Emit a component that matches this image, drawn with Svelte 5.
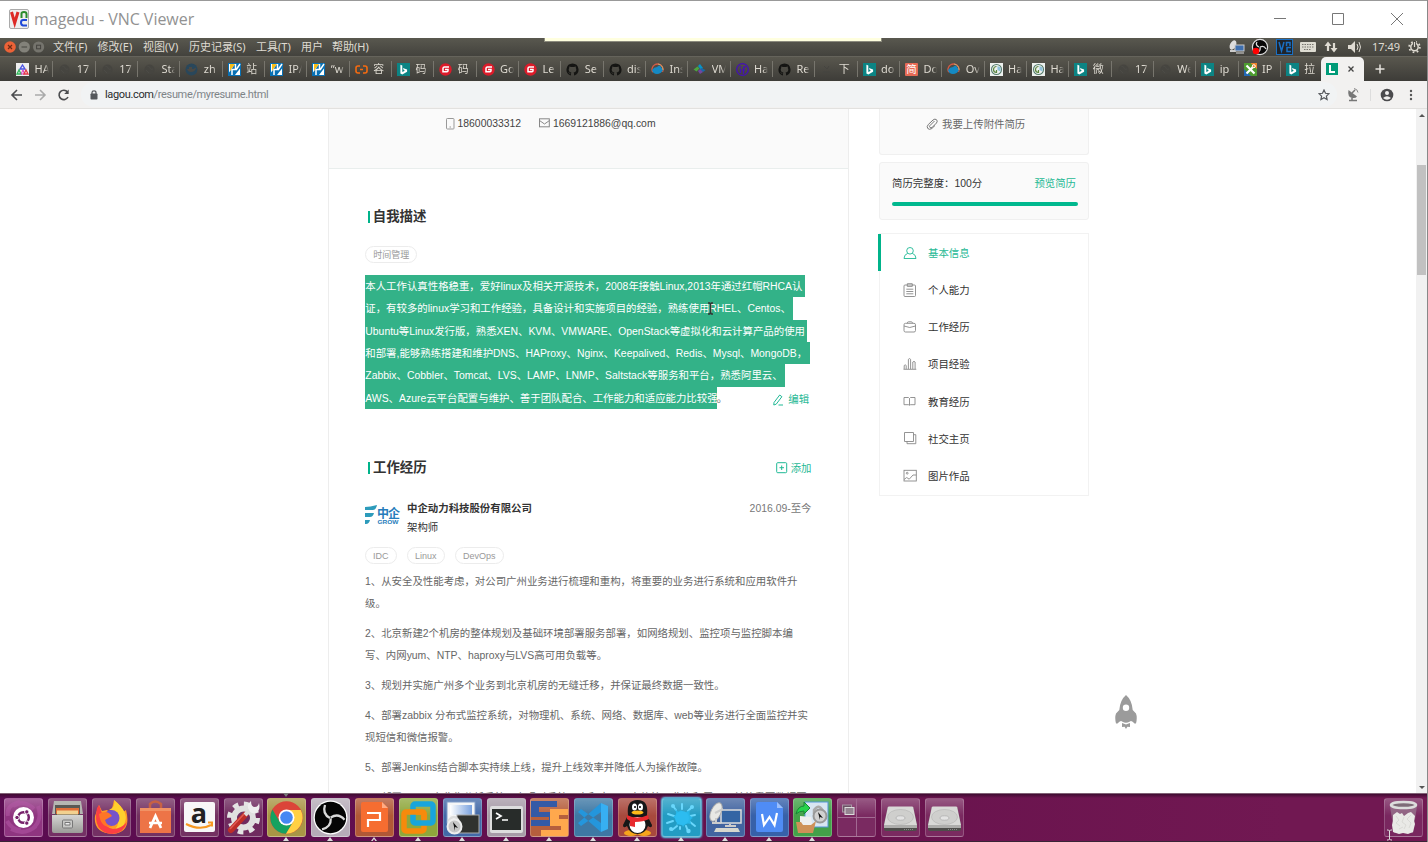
<script>
  const menus = [['文件(F)', 44.5], ['修改(E)', 45.5], ['视图(V)', 46], ['历史记录(S)', 67], ['工具(T)', 45], ['用户', 31], ['帮助(H)', 45]];

  const ring = '<circle cx="6.5" cy="6.5" r="5" fill="#464540"/><path d="M4 3q3 0 3 2t3 1M3 7l3 3" stroke="#4c4b46" fill="none"/>';
  const bing = '<rect width="13" height="13" fill="#0c8484"/><path d="M3.4 1.8l1.9.7v6.6l2.6-1.4-1.2-.7-.8-2 4.2 1.5v2.2L5.3 11.6l-1.9-1z" fill="#fff"/>';
  const gee = '<circle cx="6.5" cy="6.5" r="6.2" fill="#dc1b2a"/><path d="M10 3.9H5.4Q4.1 3.9 4 5.2v3.600h4q1 0 1-1V6.600H6" fill="none" stroke="#fff" stroke-width="1.5"/>';
  const hub = '<path fill="#151513" d="M6.5.5a6.200 6.200 0 0 0-2 12c.4 0 .5-.2.5-.4v-1.300c-1.700.3-2.100-.7-2.100-.7-.3-.7-.6-.9-.6-.9 1 0 1.200.7 1.200.7.6.9 1.300.6 1.600.5q0-.6.4-.8c-1.400-.2-2.800-.7-2.800-3q0-1 .6-1.600-.2-.8 0-1.600.8 0 1.700.7a6 6 0 0 1 3 0q.9-.7 1.700-.7.3.8 0 1.600.6.7.6 1.600c0 2.300-1.400 2.800-2.800 3 .3.2.5.6.5 1.200v1.300c0 .2.1.4.5.4A6.200 6.200 0 0 0 6.500.5z"/>';
  const wiki = '<rect width="13" height="13" fill="#0870b4"/><path d="M1 1h6L1 9.500zM12 5.500V12H7z" fill="#fff"/><path d="M2 1h5L2 8z" fill="#f8bd17"/><path d="M7.500 1v5.500H4V12M12 1L8 7" stroke="#fff" stroke-width="1.500" fill="none"/>';
  const swirl = '<circle cx="6.5" cy="6.5" r="5.5" fill="none" stroke="#d55b44" stroke-width="1.3" stroke-dasharray="22 13" transform="rotate(150 6.5 6.5)"/><path d="M1 7q2-3 5-3 3-3 4 0l2 3q-2 4-6 4T1 7z" fill="#1589c3"/><path d="M12 7q0-5-5-6" fill="none" stroke="#caa66c" stroke-width="1"/>';
  const haIcon = '<rect width="13" height="13" fill="#eef1ef"/><circle cx="6.5" cy="6.5" r="5" fill="none" stroke="#557c6c" stroke-width="1.1"/><path d="M6.500 3.500a3 3 0 1 0 0 6V7" fill="none" stroke="#59843d" stroke-width="1.2"/><path d="M7.500 3l3 1.500v4L7.500 7z" fill="#8dc1dc"/>';

  const tabs = [
    ['HA', '<rect width="13" height="13" fill="#eee"/><path d="M4 6L6.5 2 9 6z" fill="none" stroke="#4c54e5" stroke-width="1.4"/><path d="M1 11l2-4 2 4z" fill="none" stroke="#31b95b" stroke-width="1.3"/><path d="M5 11l2-4 1.5 4z" fill="none" stroke="#df39c1"/><path d="M8 11l2-4 2 4z" fill="none" stroke="#e63946" stroke-width="1.3"/>'],
    ['17', ring], ['17', ring], ['Sta', ring],
    ['zh', '<circle cx="6.5" cy="6.5" r="6" fill="#29475b"/><path d="M2 6h7q1-2 2-1-1 4-5 4-3 0-4-3zM4 4h3v2H4z" fill="#4a4945"/>'],
    ['站', wiki], ['IP/', wiki], ['“w', wiki],
    ['容', '<path d="M5 3H3Q1 3 1 5v3q0 2 2 2h2M8 3h2q2 0 2 2v3q0 2-2 2H8M5 6.5h3" fill="none" stroke="#f66b10" stroke-width="1.6"/>'],
    ['码', bing], ['码', gee], ['Go', gee], ['Le', gee], ['Se', hub], ['dis', hub], ['Ins', swirl],
    ['VM', '<path d="M.5 6.5l4-3 2 2-3 3z" fill="#4da43e"/><path d="M5 3l2-2 3 4-2 2z" fill="#0792c7"/><path d="M8 5l4.5 2L10 9 7 7z" fill="#1769a8"/><path d="M5 8l2-2 3 3-3 2z" fill="#7146a0"/>'],
    ['Ha', '<circle cx="6.5" cy="6.5" r="5.8" fill="none" stroke="#4411b5" stroke-width="1.3"/><path d="M4.500 10V5.500M4.500 3v1.300M7.500 11V5q0-1.500 2.500-1M6.500 7H9" fill="none" stroke="#4411b5" stroke-width="1.4"/>'],
    ['Re', hub], ['下', '<path d="M4 3l3 3 2-3M3 9h7" stroke="#454440" fill="none"/>'], ['do', bing],
    ['Do', '<rect width="13" height="13" rx="1" fill="#e66a55"/><text x="6.5" y="10.3" text-anchor="middle" font-size="10.5" fill="#fff" font-family="Noto Sans CJK SC">简</text>'],
    ['Ov', swirl], ['Ha', haIcon], ['Ha', haIcon], ['微', bing], ['17', ring], ['We', ring], ['ip', bing],
    ['IP', '<rect width="13" height="13" fill="#4d9b2f"/><path d="M6.5 0H13v6z" fill="#ee842c"/><path d="M0 6v7h7z" fill="#2268b5"/><path d="M2.500 2.500l8 8M10 3L2.500 10.500" stroke="#fff" stroke-width="2.200" fill="none"/><circle cx="9.800" cy="3.200" r="1.500" fill="#ee842c" stroke="#fff"/>'],
    ['拉', bing]
  ];

  const about = [
    ['本人工作认真性格稳重，爱好linux及相关开源技术，2008年接触Linux,2013年通过红帽RHCA认', 439.5],
    ['证，有较多的linux学习和工作经验，具备设计和实施项目的经验，熟练使用RHEL、Centos、', 427.5],
    ['Ubuntu等Linux发行版，熟悉XEN、KVM、VMWARE、OpenStack等虚拟化和云计算产品的使用', 442],
    ['和部署,能够熟练搭建和维护DNS、HAProxy、Nginx、Keepalived、Redis、Mysql、MongoDB，', 444.5],
    ['Zabbix、Cobbler、Tomcat、LVS、LAMP、LNMP、Saltstack等服务和平台，熟悉阿里云、', 420],
    ['AWS、Azure云平台配置与维护、善于团队配合、工作能力和适应能力比较强', 351.5]
  ];

  const duties = [
    ['1、从安全及性能考虑，对公司广州业务进行梳理和重构，将重要的业务进行系统和应用软件升', '级。'],
    ['2、北京新建2个机房的整体规划及基础环境部署服务部署，如网络规划、监控项与监控脚本编', '写、内网yum、NTP、haproxy与LVS高可用负载等。'],
    ['3、规划并实施广州多个业务到北京机房的无缝迁移，并保证最终数据一致性。'],
    ['4、部署zabbix 分布式监控系统，对物理机、系统、网络、数据库、web等业务进行全面监控并实', '现短信和微信报警。'],
    ['5、部署Jenkins结合脚本实持续上线，提升上线效率并降低人为操作故障。'],
    ['6、部署ELK日志收集分析系统，实现对系统日志和应用日志的统一收集和展示，并将重要数据写']
  ];

  const nav = [
    ['基本信息', '<circle cx="7" cy="4.8" r="3.3"/><path d="M4.7 7.3Q1 8.7 1 12.5h12Q13 8.7 9.3 7.3"/>'],
    ['个人能力', '<rect x="1" y="2" width="11.5" height="11.5" rx="1"/><path d="M4.3 3.4V.7h5v2.7zM3.3 6.2h7M3.3 8.5h7M3.3 10.8h7"/>'],
    ['工作经历', '<rect x="1" y="3.3" width="11.5" height="8.7" rx="1.5"/><path d="M4.3 3.3q0-1.5 1.2-1.5h2.8q1.2 0 1.2 1.5M1 6q5.7 3 11.5 0"/>'],
    ['项目经验', '<path d="M.5 12.3h12.8M1.2 12V8.5q1-1.3 2 0V12M5.4 12V2.3q1.1-1.5 2.2 0V12M9.8 12V5q1.2-1.3 2.3 0v7"/>'],
    ['教育经历', '<path d="M1 3.5h4.5l1 1 1-1H12v7.2H7.5l-1 .6-1-.6H1zM6.5 4.5v6.5"/>'],
    ['社交主页', '<path d="M1.5 1.5h9v9h-9zM10.5 3.7h2.3v9H4v-2.2"/>'],
    ['图片作品', '<rect x="1" y="1.3" width="12.3" height="10.7"/><circle cx="4.2" cy="4.2" r=".9"/><path d="M1 10.5l2.7-2 2.5 1.7L10 6h3.3"/>']
  ];

  const disk = '<path d="M7 9h25l4 18v4q0 2-2 2H5q-2 0-2-2v-4z" fill="#4e4e4b"/><path d="M8 8.500h23q1 0 1.300 1L36 27H3L6.700 9.500q.3-1 1.300-1z" fill="#d9d9d7"/><ellipse cx="19.500" cy="19" rx="13" ry="7.500" fill="#cfcfcd" stroke="#b4b4b2" stroke-width=".6"/><ellipse cx="19.500" cy="20" rx="4.500" ry="2.200" fill="#e3e3e3" stroke="#aaa" stroke-width=".7"/><path d="M3 27h33v3H3z" fill="#adadab"/><path d="M23 31.500h9" stroke="#888" stroke-dasharray="1 1"/>';
  const apps = [
    { bg: '#8f3580', svg: '<path d="M4 18Q2 7 16 4M7 31Q21 38 32 28M34 8q5 15-6 23M3 23q5 9 14 9M9 8q11-7 21 3" stroke="#b65aa8" stroke-width="4" fill="none" opacity=".5"/><circle cx="19.500" cy="19.500" r="10.500" fill="#fff"/><circle cx="19.500" cy="19.500" r="5.300" fill="none" stroke="#76226b" stroke-width="2.500"/><g fill="#76226b" stroke="#fff" stroke-width="1"><circle cx="13" cy="19.500" r="2.200"/><circle cx="22.800" cy="13.900" r="2.200"/><circle cx="22.800" cy="25.100" r="2.200"/></g>' },
    { bg: '#743064', svg: '<path d="M6 3h27l2 13H4z" fill="#b5b6b2"/><rect x="7" y="7" width="25" height="10" fill="#595955"/><path d="M8 10h23v6H8z" fill="#df6e38"/><path d="M9 12.500h21v4H9z" fill="#f2d18f"/><path d="M4 17h31v16q0 2-2 2H6q-2 0-2-2z" fill="url(#silver)"/><rect x="14.500" y="22" width="10" height="8" rx="1" fill="#c8c8c6" stroke="#777"/><path d="M17 24.500h5v2.500h-5z" fill="#eee" stroke="#777"/>' },
    { bg: '#743064', svg: '<path d="M22 2q8 6 9 12l3-2q6 22-13 24Q1 35 3 18l4-11 3 6 5-1 4 3z" fill="#ff9b25"/><path d="M22 2q15 12 11 22-4 12-14 11 9-6 7-15t-9-8q7-3 5-10z" fill="#ffd02d"/><path d="M5 10Q0 34 20 36q12-1 15-12-6 7-14 7-9-2-9-10L7 7z" fill="#fb3f43"/><circle cx="19.500" cy="20" r="8" fill="#7653c9"/><path d="M7 16q8-5 13 2l-7 4q2 7 9 6-13 4-15-12z" fill="#ff7526"/>' },
    { bg: '#733161', svg: '<path d="M14 12V6q5-5 11 0v6" fill="none" stroke="#c76143" stroke-width="2.500"/><path d="M4 10h31v25H4z" fill="#ed7447"/><path d="M4 10h31v3H4z" fill="#f19264"/><path d="M14 30l5.500-12L25 30M13 25h13" fill="none" stroke="#fff" stroke-width="2.700"/>' },
    { bg: '#733161', svg: '<rect x="4" y="4" width="31" height="30" rx="2" fill="#f7f7f7"/><text x="19" y="25" font-family="Open Sans" font-size="27" font-weight="700" text-anchor="middle" fill="#222">a</text><path d="M6 26q14 7 25 1M28 24.500h4v4" fill="none" stroke="#f79820" stroke-width="2"/>' },
    { bg: '#6f2b5f', svg: '<circle cx="19.500" cy="20" r="14" fill="none" stroke="#e4e4e4" stroke-width="5" stroke-dasharray="5.500 5.490"/><circle cx="19.500" cy="20" r="9.500" fill="none" stroke="#e0e0e0" stroke-width="6"/><path d="M7 32l14-15" stroke="#bd2d28" stroke-width="6" stroke-linecap="round"/><path d="M6 31l14-15" stroke="#e05a52" stroke-width="1.500"/><path d="M21 17l7-7" stroke="#ddd" stroke-width="4"/><path d="M25 12q-3-5 2-9 0 6 4 6 3 0 4-4 2 8-4 10-4 1-6-3z" fill="#eee"/>' },
    { bg: '#a99545', run: 2, svg: '<circle cx="19.500" cy="19.500" r="16.300" fill="#db4539"/><path d="M5.400 11.500A16.300 16.300 0 0 0 19 35.800l7.500-12.500-7 4.200-7-4z" fill="#15a260"/><path d="M19.500 12h14.300A16.300 16.300 0 0 1 19 35.800l7.500-12.500z" fill="#ffd044"/><circle cx="19.500" cy="19.500" r="8" fill="#fff"/><circle cx="19.500" cy="19.500" r="6.300" fill="#4588f3"/>' },
    { bg: '#b6acb8', run: 1, svg: '<circle cx="19.500" cy="19.500" r="17" fill="#fff"/><circle cx="19.500" cy="19.500" r="15.700" fill="#050505"/><g fill="none" stroke="#d9d9d9" stroke-width="2.300"><path d="M19 20Q11 16 14 7"/><path d="M19 20Q11 16 14 7" transform="rotate(120 19.500 20)"/><path d="M19 20Q11 16 14 7" transform="rotate(240 19.500 20)"/></g>' },
    { bg: '#b15836', run: 3, svg: '<path d="M8 4h19l6 6v22q0 2-2 2H8q-2 0-2-2V6q0-2 2-2z" fill="#f66d31"/><path d="M27 4v6h6z" fill="#ffab84"/><path d="M12 15h13v7H13v7" fill="none" stroke="#fff" stroke-width="2.200"/>' },
    { bg: '#8fa73c', run: 1, svg: '<rect x="5" y="14" width="20" height="19" rx="2" fill="none" stroke="#f78a0b" stroke-width="5.500"/><rect x="14" y="6" width="20" height="19" rx="2" fill="none" stroke="#18a5db" stroke-width="5.500"/><path d="M10 14h13q2 0 2 2v5" fill="none" stroke="#f78a0b" stroke-width="5.500"/>' },
    { bg: '#4269a8', run: 1, svg: '<rect x="4" y="4" width="28" height="21" fill="#f5f6f7" stroke="#809cc7"/><path d="M7 7h22v10H7z" fill="url(#bluewin)"/><rect x="14" y="17" width="22" height="18" fill="#30322f" stroke="#aaa"/><path d="M6 26v-4q5-6 9 0v4" fill="none" stroke="#ddd" stroke-width="2.500"/><circle cx="11.500" cy="28.500" r="7" fill="#c7c7c7" stroke="#eee" stroke-width="2"/><path d="M10 24l5 6-3-1v4z" fill="#111"/>' },
    { bg: '#a79ba7', run: 1, svg: '<rect x="3" y="8" width="33" height="27" rx="2" fill="#ddd"/><rect x="5" y="11" width="29" height="21" fill="#282c2a"/><path d="M9 15l5 3-5 3M15 22h6" fill="none" stroke="#fff" stroke-width="1.700"/>' },
    { bg: '#b65f3d', run: 1, svg: '<path d="M1 3h26v6H9v5h18v14H1v-6h18v-3H1z" fill="#345aa6"/><path d="M20 11h18v6h-9v4h9v17H11v-6h20v-4H20z" fill="#ffa84d"/>' },
    { bg: '#3e78a4', run: 1, svg: '<path d="M27 5L4 25l3 3 20-14zM27 34L4 14l3-3 20 14z" fill="#2496dc"/><path d="M27 5l7 3v23l-7 3z" fill="#37aff2"/>' },
    { bg: '#a8493d', run: 1, svg: '<ellipse cx="13" cy="35" rx="7" ry="3" fill="#f6a51c"/><ellipse cx="26" cy="35" rx="7" ry="3" fill="#f6a51c"/><path d="M10 17q-2-15 9.500-15T29 17l5 10q0 4-4 1-3 8-10.500 8T9 28q-4 3-4-1z" fill="#171717"/><ellipse cx="19.500" cy="27" rx="8" ry="8" fill="#fff"/><ellipse cx="16.500" cy="9" rx="2.500" ry="3.500" fill="#fff"/><ellipse cx="22.500" cy="9" rx="2.500" ry="3.500" fill="#fff"/><circle cx="17" cy="9" r="1"/><circle cx="22" cy="9" r="1"/><ellipse cx="19.500" cy="14.500" rx="6" ry="2" fill="#ffba19"/><path d="M9 17q10 5 21 0l1 4q-6 3-14 3v5l-5-1v-5l-3-2z" fill="#e82a2e"/>' },
    { bg: '#239cc3', run: 1, on: true, svg: '<g stroke="#69d7fc" stroke-width="2" stroke-linecap="round"><path d="M14 12l-3-4M20 11V6M26 13l4-4M28 18l5-1M28 24l5 4M24 28l2 5M15 28l-5 4M11 23l-6 2M12 18l-6-2M18 29v2"/></g><g fill="#69d7fc"><circle cx="11" cy="8" r="2"/><circle cx="30" cy="9" r="2"/><circle cx="26.500" cy="33" r="2.200"/><circle cx="9" cy="31" r="2"/></g><path d="M13 11q4 5 6 1 2 4 5 2l4-2q-2 5 3 8-4 1-2 6-5-2-8 3-1-4-7-2 3-5-3-8 5-2 2-8z" fill="#27b7e9"/><circle cx="20" cy="20" r="7" fill="#2cbcf0"/>' },
    { bg: '#4264a0', run: 1, svg: '<rect x="15" y="12" width="20" height="13" fill="#3465a4" stroke="#ddd" stroke-width="1.500"/><path d="M24 26v3M19 28h11" stroke="#ccc" stroke-width="2"/><path d="M10 30h22l2 4H8z" fill="#d7d7ce"/><ellipse cx="10" cy="14" rx="5" ry="10" transform="rotate(25 10 14)" fill="#e8e8e5" stroke="#aaa"/><path d="M10 20v4M6 25h9M9 15l8-4" stroke="#ccc" stroke-width="2"/>' },
    { bg: '#3761a9', run: 1, svg: '<path d="M8 4h19l6 6v22q0 2-2 2H8q-2 0-2-2V6q0-2 2-2z" fill="#4f8cf5"/><path d="M27 4v6h6z" fill="#9bbffc"/><path d="M12 16l2 11 5.500-8 5 8 2.500-12" fill="none" stroke="#fff" stroke-width="2.200"/>' },
    { bg: '#43a149', run: 1, svg: '<rect x="12" y="4" width="23" height="25" fill="#d8e6f2" stroke="#5595d7"/><path d="M21 16v-4q5-7 9 1v4" fill="none" stroke="#aaa" stroke-width="2.500"/><circle cx="27" cy="18" r="6.500" fill="#d1d1d1" stroke="#999" stroke-width="2"/><path d="M25 14l5 6-3-1v3z" fill="#111"/><path d="M3 16Q5 8 11 8V4l6 6-6 6v-3q-5 0-8 3z" fill="#26d34b" stroke="#188435"/><path d="M7 18l11 1 2 12H7z" fill="#eee"/><path d="M3 24h5l2 3h8l5-4-3 12H5z" fill="#ce9158"/>' },
    { bg: '#7a2a61', svg: '<path d="M19.500 1v37M1 19.500h37" stroke="#a26992"/><rect x="5.500" y="7" width="9" height="7" fill="#6c5366" stroke="#a893a3"/><rect x="8" y="9.500" width="9" height="7" fill="#958391" stroke="#ddd"/>' },
    { bg: '#7a2a60', svg: disk }, { bg: '#7a2a60', svg: disk }
  ];
  const trash = '<path d="M6 8h27l-4 27H10z" fill="#9a7c91" opacity=".7"/><g fill="#e9e9e6"><path d="M9 17l4-3 3 2 2-1 2 3 4-3 3-1 4 4-1 5 1 3-2 8-5 2-5-1-4 1-6-2-1-7 1-4z"/></g><path d="M12 18l3 4-3 3 4 3M20 19l-2 5 4 3-2 4M27 17l-4 4 4 4-2 5M15 31l4-2" fill="none" stroke="#d3d3cf" stroke-width=".7"/><ellipse cx="19.500" cy="7" rx="12.500" ry="3" fill="#7e6c78" stroke="#ddd" stroke-width="2.500"/>';
</script>

<svg class="defs" width="0" height="0"><defs>
  <linearGradient id="silver" x2="0" y2="1"><stop stop-color="#d5d5d3"/><stop offset="1" stop-color="#9b9b98"/></linearGradient>
  <linearGradient id="bluewin"><stop stop-color="#fff"/><stop offset="1" stop-color="#7aa2df"/></linearGradient>
</defs></svg>

<div class="screen">
  <header class="title">
    <svg width="20" height="20" viewBox="0 0 20 20"><rect x=".5" y=".5" width="19" height="19" rx="1.500" fill="#eee" stroke="#aaa"/><path d="M2.500 3l3.200 11L9 3" fill="none" stroke="#dd2a26" stroke-width="3"/><path d="M12.500 9V4.500q0-1.500 2.500-1.500t2.500 2V9" fill="none" stroke="#2b8c2c" stroke-width="2"/><path d="M18 11h-4q-2 0-2 2.500t2 3h4" fill="none" stroke="#1f49d8" stroke-width="2"/></svg>
    <span class="name">magedu - VNC Viewer</span>
    <svg class="controls" width="132" height="14" viewBox="0 0 132 14" fill="none" stroke="#777"><path d="M0 6.500h12M58.500 1.500h11v11h-11zM117 1l12 12M129 1l-12 12"/></svg>
  </header>

  <div class="menubar">
    <svg class="orbs" width="42" height="14" viewBox="0 0 42 14"><circle cx="6" cy="7" r="5.800" fill="#ec6237"/><path d="M4 5l4 4M8 5L4 9" stroke="#6d2c15" stroke-width="1.200"/><circle cx="20.300" cy="7" r="5.600" fill="#83827a"/><path d="M17.500 7h5.600" stroke="#45443f"/><circle cx="34.600" cy="7" r="5.600" fill="#75746d"/><rect x="32.600" y="5.200" width="4" height="3.600" fill="none" stroke="#45443f"/></svg>
    {#each menus as [label, w]}<span style="width:{w}px">{label}</span>{/each}
    <svg class="tray" width="132" height="18" viewBox="0 0 132 18"><ellipse cx="5" cy="7" rx="3" ry="5" transform="rotate(25 5 7)" fill="#ddd"/><path d="M2 13h5l2-4" stroke="#ccc" stroke-width="2" fill="none"/><rect x="7" y="7" width="9" height="6" fill="#3e6faf" stroke="#ccc"/><path d="M8 15h8" stroke="#ddd"/>
      <circle cx="32" cy="9" r="7.600" fill="#080808" stroke="#ddd" stroke-width="1.200"/><path d="M31 9q-4-2-2-5M32 9q4-2 6 2M32 9q1 4-3 6" stroke="#ddd" stroke-width="1.300" fill="none"/><circle cx="28" cy="13" r="3.300" fill="#f00"/>
      <rect x="48.500" y="1.500" width="16" height="15" fill="#20242a" stroke="#1970c6"/><path d="M51 4l2.500 9L56 4M58.500 8V4.500H62V8M63 9.500h-4v4h4" fill="none" stroke="#1970c6" stroke-width="1.500"/>
      <rect x="72" y="4" width="16" height="10" rx="1" fill="#dedcd2"/><path d="M74 6.500h12M74 9h12M76 11.500h7" stroke="#77756e" stroke-dasharray="1.500 1"/>
      <path d="M100 5v8M106 5v8" stroke="#dfdbd2" stroke-width="2.200"/><path d="M96.500 8L100 3.500l3.500 4.500zM102.500 10h7L106 14.500z" fill="#dfdbd2"/>
      <path d="M120 7h3l4-4v12l-4-4h-3z" fill="#dfdbd2"/><path d="M129 6q2 3 0 6M131 4q3 5 0 10" fill="none" stroke="#dfdbd2"/></svg>
    <time>17:49</time>
    <svg class="gear" width="13" height="14" viewBox="0 0 13 14"><circle cx="6.500" cy="7" r="3.700" fill="none" stroke="#dfdbd2" stroke-width="1.500"/><circle cx="6.500" cy="7" r="5.300" fill="none" stroke="#dfdbd2" stroke-width="1.800" stroke-dasharray="1.700 2.460"/><path d="M6.500 1v6" stroke="#4a4943" stroke-width="3"/><path d="M6.500 2v5" stroke="#dfdbd2" stroke-width="1.200"/></svg>
    <i class="vnc-handle"></i>
  </div>

  <div class="tabs">
    {#each tabs as [label, art]}
      <div class="tab"><svg width="13" height="13" viewBox="0 0 13 13">{@html art}</svg><span>{label}</span></div>
    {/each}
    <div class="tab active"><svg width="12" height="12" viewBox="0 0 12 12"><rect width="12" height="12" fill="#009b78"/><path d="M4 2v7h5" fill="none" stroke="#fff" stroke-width="2"/></svg><svg width="8" height="8" viewBox="0 0 8 8"><path d="M1.500 1.500l5 5M6.500 1.500l-5 5" stroke="#444" stroke-width="1.300"/></svg></div>
    <svg class="plus" width="10" height="10" viewBox="0 0 10 10"><path d="M5 .5v9M.5 5h9" stroke="#e6e4de" stroke-width="1.500"/></svg>
  </div>

  <div class="toolbar">
    <svg width="62" height="14" viewBox="0 0 62 14" fill="none" stroke="#4b4c4f" stroke-width="1.600"><path d="M12 7H2M7 2L2 7l5 5"/><path d="M25 7h10M30 2l5 5-5 5" stroke="#aaa"/><path d="M57.500 4A4.700 4.700 0 1 0 58 9"/><path d="M58.700 1.500v4.500h-4.500z" fill="#4b4c4f" stroke="none"/></svg>
    <div class="address">
      <svg width="8" height="10" viewBox="0 0 8 10"><rect x=".5" y="3.500" width="7" height="6" rx=".8" fill="#55585c"/><path d="M2 4V2.500q0-1.600 2-1.600t2 1.600V4" fill="none" stroke="#55585c" stroke-width="1.200"/></svg>
      <span><b>lagou.com</b>/resume/myresume.html</span>
      <svg class="star" width="12" height="12" viewBox="0 0 12 12"><path d="M6 1l1.500 3.300 3.500.4-2.600 2.400.7 3.500L6 8.800l-3.100 1.800.7-3.500L1 4.700l3.500-.4z" fill="none" stroke="#55585c" stroke-width="1.200"/></svg>
    </div>
    <svg class="tools" width="80" height="16" viewBox="0 0 80 16"><path d="M5.500 3q-1.500 7 4 8 3 .5 4.500-1.500z" fill="#777"/><path d="M9 6l3-3M9 10.500v2.500M6 13.500h8" fill="none" stroke="#777" stroke-width="1.500"/><path d="M11 1.500q3.500.5 4 4" fill="none" stroke="#888"/><path d="M27.500 2v12" stroke="#ddd"/><circle cx="44" cy="8" r="6.300" fill="#4b4b4d"/><circle cx="44" cy="6" r="2" fill="#f2f1f0"/><path d="M40 11q4-3.500 8 0-4 3.500-8 0z" fill="#f2f1f0"/><g fill="#555"><circle cx="68" cy="4" r="1.200"/><circle cx="68" cy="8" r="1.200"/><circle cx="68" cy="12" r="1.200"/></g></svg>
  </div>

  <div class="page">
    <main>
      <section class="contact">
        <svg width="9" height="12" viewBox="0 0 9 12" fill="none" stroke="#999"><rect x=".5" y=".5" width="7.500" height="10.500" rx=".8"/><path d="M3.500 9h1.500"/></svg><span class="phone">18600033312</span>
        <svg width="11" height="10" viewBox="0 0 11 10" fill="none" stroke="#888"><rect x=".5" y=".8" width="9.800" height="8"/><path d="M.5 2.500l5 3.500 5-3.500"/></svg><span class="mail">1669121886@qq.com</span>
      </section>
      <section class="about">
        <h2>自我描述</h2>
        <div class="tags"><span class="tag">时间管理</span></div>
        <div class="intro">
          {#each about as [line, w], i}<p><span class="marked" style="width:{w}px">{line}</span>{#if i === 5}<span>。</span>{/if}</p>{/each}
          <a class="edit"><svg width="11" height="12" viewBox="0 0 11 12" fill="none" stroke="#1fb995"><path d="M1 8.500L6.700 1l2.200 1.700-5.700 7.500L.8 11zM5.500 11H10"/></svg>编辑</a>
          <svg class="caret" width="7" height="13" viewBox="0 0 7 13"><path d="M1 1h1.500l1 1 1-1H6M3.500 2v9M1 12h1.500l1-1 1 1H6" fill="none" stroke="#333" stroke-width="1.500"/></svg>
        </div>
      </section>
      <section class="work">
        <div class="head"><h2>工作经历</h2><a><svg width="12" height="12" viewBox="0 0 12 12" fill="none" stroke="#1fb995"><rect x=".7" y=".7" width="10" height="10" rx="1"/><path d="M3.500 5.700h4.500M5.700 3.500v4.500"/></svg>添加</a></div>
        <div class="company">
          <svg width="36" height="24" viewBox="0 0 36 24"><path d="M0 2q5 0 12-2-1 5-4 5H0zM0 8h9q-1 4-4 4H0zM0 15h5q-1 4-4 4H0z" fill="#2d9bbb"/><text x="12" y="12.500" font-size="12" font-weight="700" textLength="23" fill="#267cbb" font-family="Noto Sans CJK SC">中企</text><text x="12.500" y="19" font-size="5" font-weight="700" textLength="21" lengthAdjust="spacingAndGlyphs" fill="#267cbb" font-family="Liberation Sans">GROW</text></svg>
          <div><strong>中企动力科技股份有限公司</strong><em>架构师</em></div><time>2016.09-至今</time>
        </div>
        <div class="tags"><span class="tag">IDC</span><span class="tag">Linux</span><span class="tag">DevOps</span></div>
        <div class="duties">{#each duties as lines}<div>{#each lines as line}<p>{line}</p>{/each}</div>{/each}</div>
      </section>
    </main>
    <aside>
      <div class="upload"><svg width="12" height="12" viewBox="0 0 12 12" fill="none" stroke="#777"><path d="M8.500 3L4 7.500Q3 8.700 4 9.500q1 .8 2 0L10.500 5q1.500-2 0-3.300T7 2L2.300 6.500q-2 2.300-.5 4t4 0L9 7.500"/></svg>我要上传附件简历</div>
      <div class="score"><div><span>简历完整度：100分</span><a>预览简历</a></div><i></i></div>
      <nav>{#each nav as [label, art], i}<a class:current={i === 0}><svg width="14" height="14" viewBox="0 0 14 14">{@html art}</svg>{label}</a>{/each}</nav>
    </aside>
    <svg class="rocket" width="22" height="34" viewBox="0 0 22 34"><path fill="#9b9b9b" fill-rule="evenodd" d="M11 0Q5 5 4.300 15L1 18.500q-1.500 4 0 10h1.500q3-4 5-1.800Q11 29 14.500 26.700q2-2.200 5 1.800H21q1.500-6 0-10L17.700 15Q17 5 11 0zm0 9.500a3.200 3.200 0 1 1 0 6.400 3.200 3.200 0 0 1 0-6.400zM7 28l4 1.500 4-1.500v4l-2.600-.3L11 34l-1.400-2.300L7 32z"/></svg>
    <div class="scroll"><i class="up"></i><i class="thumb"></i><i class="down"></i></div>
  </div>

  <footer class="dock">
    {#each apps as app}
      <div class="app" class:on={app.on} style="background-color:{app.bg}"><svg width="39" height="39" viewBox="0 0 39 39">{@html app.svg}</svg>{#if app.run}<i class:hollow={app.run === 3}></i>{/if}{#if app.run === 2}<i class="top"></i>{/if}</div>
    {/each}
    <div class="app bin" style="background-color:#79275f"><svg width="39" height="39" viewBox="0 0 39 39">{@html trash}</svg></div>
    <svg class="pointer" width="7" height="12" viewBox="0 0 7 12"><path d="M1 1h1.500l1 1 1-1H6M3.500 2v8M1 11h1.500l1-1 1 1H6" fill="none" stroke="#ddd"/></svg>
  </footer>
</div>

<style>
  :global(body) { margin: 0; overflow: hidden; }
  * { box-sizing: border-box; }
  svg { display: block; flex: none; }
  .defs { position: absolute; }
  .screen { width: 1428px; height: 842px; display: flex; flex-direction: column; background: #fff; border-right: 1px solid #888; overflow: hidden; font-family: "Liberation Sans", "Noto Sans CJK SC", sans-serif; white-space: nowrap; }
  .title { height: 38px; flex: none; border-top: 1px solid #999; display: flex; align-items: center; padding: 0 21px 0 9px; }
  .name { font: 16px/24px "Open Sans", sans-serif; color: #929292; margin: -2px 0 0 5px; letter-spacing: -.03px; }
  .title > svg:first-child { margin-top: -2px; }
  .controls { margin: -2px 0 0 auto; }
  .menubar { height: 18px; flex: none; position: relative; display: flex; align-items: center; padding: 0 6px 0 4px; background: linear-gradient(#59584f, #43423d); color: #dfdbd2; font: 11px/18px "Noto Sans", "Noto Sans CJK SC", sans-serif; }
  .orbs { margin-right: 7px; }
  .menubar span { flex: none; }
  .tray { margin-left: auto; overflow: visible; }
  .menubar time { margin-left: 12px; font-size: 11px; width: 27px; }
  .gear { margin-left: 9px; }
  .vnc-handle { position: absolute; left: 544px; top: 0; width: 338px; height: 4px; background: #ffffdf; border: 1px solid #8c8b7e; border-top: 0; }
  .tabs { height: 25px; flex: none; display: flex; align-items: stretch; padding-left: 11px; background: linear-gradient(#59574e, #3d3c38); border-top: 1px solid #65635b; }
  .tab { width: 42.33px; flex: none; display: flex; align-items: center; padding-left: 5px; background: linear-gradient(#77756d, #77756d) right center / 1px 16px no-repeat; }
  .tab span { margin: -1px 0 0 5.500px; width: 14px; overflow: hidden; color: #dedad1; font: 11px/16px "Noto Sans", "Noto Sans CJK SC", sans-serif; mask-image: linear-gradient(90deg, #000 65%, transparent); }
  .tab:nth-child(31) { background: none; }
  .tab.active { background: #f2f1f0; border-radius: 5px 5px 0 0; gap: 9px; padding-left: 5px; margin-left: -2px; }
  .plus { align-self: center; margin-left: 11px; }
  .toolbar { height: 28px; flex: none; display: flex; align-items: center; background: #f2f1f0; border-bottom: 1px solid #e2e1df; padding-left: 10px; }
  .address { margin-left: 9px; width: 1256px; height: 25px; border-radius: 13px; background: #f1f3f4; display: flex; align-items: center; padding: 0 7px 0 9px; }
  .address span { margin-left: 7px; font: 11px/20px Roboto, sans-serif; letter-spacing: -.35px; color: #7e8488; }
  .address b { font-weight: 400; color: #292b2d; }
  .star { margin-left: auto; }
  .tools { margin-left: 6px; }
  .page { height: 684px; flex: none; position: relative; display: flex; padding-left: 328px; overflow: hidden; background: #fff; color: #666; font-size: 10.42px; }
  main { width: 521px; flex: none; border: solid #ededed; border-width: 0 1px; }
  .contact { height: 60px; background: #fafafa; border-bottom: 1px solid #e9eeed; padding: 8px 0 0 117px; display: flex; align-items: flex-start; color: #444; line-height: 14px; }
  .phone { margin: 0 18px 0 2.500px; width: 63.500px; }
  .mail { margin-left: 3px; }
  .contact svg { margin-top: 1px; }
  .about { height: 278px; padding: 37px 35px 0 36.300px; }
  h2 { margin: 0 0 0 2.500px; font-size: 13.400px; line-height: 22px; color: #333; display: flex; align-items: center; gap: 3px; }
  h2::before { content: ""; width: 2px; height: 12px; background: #00b38a; }
  .tags { display: flex; gap: 10.500px; }
  .tag { height: 17px; border: 1px solid #ececec; border-radius: 9px; padding: 0 7px; font-size: 9px; line-height: 16px; color: #999; }
  .about .tags { margin-top: 18px; }
  .intro { position: relative; margin-top: 12px; }
  p { margin: 0; height: 22.35px; line-height: 24px; display: flex; }
  .marked { display: block; flex: none; background: #33b288; color: #fff; height: 22.350px; }
  .edit { position: absolute; left: 408px; top: 118px; display: flex; align-items: center; gap: 4px; color: #1fb995; line-height: 14px; }
  .caret { position: absolute; left: 341.500px; top: 27px; }
  .work { padding: 10px 36px 0 36px; }
  .work h2 { margin-left: 3px; }
  .head { display: flex; justify-content: space-between; height: 22px; align-items: center; }
  .head a { display: flex; align-items: center; gap: 3px; color: #1fb995; margin: -1px .5px 0 0; }
  .company { display: flex; margin-top: 20px; line-height: 19px; color: #333; height: 38px; }
  .company > svg { margin-top: 6px; }
  .company > div { margin-left: 6px; display: flex; flex-direction: column; }
  .company em { font-style: normal; }
  .company time { margin-left: auto; color: #777; margin-right: .5px; }
  .work .tags { margin-top: 10px; }
  .duties { margin-top: 6px; }
  .duties > div { margin-bottom: 7.450px; }
  aside { width: 210px; flex: none; margin-left: 30px; color: #333; }
  .upload { height: 46px; background: #fafafa; border: 1px solid #f0f0f0; border-top: 0; border-radius: 0 0 3px 3px; display: flex; gap: 4px; padding: 8px 0 0 46px; color: #666; line-height: 16px; }
  .upload svg { margin-top: 1px; }
  .score { margin-top: 7px; height: 58px; background: #fafafa; border: 1px solid #f0f0f0; border-radius: 3px; padding: 13px 10.500px 0 12px; }
  .score div { display: flex; justify-content: space-between; line-height: 16px; padding-right: 1.500px; }
  .score a { color: #1fb995; }
  .score i { display: block; height: 4px; margin-top: 10px; border-radius: 2px; background: #00b88e; }
  nav { margin-top: 13px; height: 263px; border: 1px solid #f2f2f2; }
  nav a { height: 37.200px; display: flex; align-items: center; gap: 11px; padding-left: 23px; }
  nav svg { fill: none; stroke: #888; stroke-width: .9; }
  nav .current { color: #1fb995; border-left: 3px solid #00b38a; margin-left: -2px; padding-left: 22px; height: 37px; }
  .current svg { stroke: #1fb995; }
  .rocket { position: absolute; left: 1115px; top: 586px; }
  .scroll { position: absolute; right: 0; top: 0; width: 11px; height: 684px; background: #f1f1f1; }
  .scroll i { position: absolute; left: 3px; border: solid transparent; border-width: 0 3px; }
  .scroll .up { top: 5px; border-bottom: 3px solid #555; }
  .scroll .down { bottom: 4px; border-top: 3px solid #555; }
  .scroll .thumb { left: 1px; top: 56px; width: 9px; height: 110px; border: 0; background: #c1c1c1; }
  .dock { height: 49px; flex: none; position: relative; display: flex; align-items: flex-start; gap: 4.850px; padding: 5px 4px 0 4.300px; border-top: 1px solid #806175; border-bottom: 1px solid #3a2537; background: linear-gradient(#3f0b31, transparent 4px), linear-gradient(90deg, #5a0c51, #66114c 50%, #711852 90%); }
  .app { width: 39px; height: 39px; flex: none; position: relative; margin-top: -1px; border-radius: 3px; border: 1px solid rgba(255,255,255,.2); background-image: linear-gradient(rgba(255,255,255,.22), transparent 45%); }
  .app svg { margin: -1px; }
  .app i { position: absolute; left: 15px; bottom: -5px; border: solid transparent; border-width: 0 3px 4px; border-bottom-color: #ddd; }
  .app .top { bottom: auto; top: -6px; border-width: 4px 3px 0; border-top-color: #777; }
  .app .hollow::after { content: ""; position: absolute; left: -2px; top: 2px; border: solid transparent; border-width: 0 2px 3px; border-bottom-color: #65104d; }
  .on { box-shadow: 0 0 2px 1px #5bd3f3; }
  .bin { margin-left: auto; }
  .pointer { position: absolute; left: 1386px; top: 35px; }
</style>
